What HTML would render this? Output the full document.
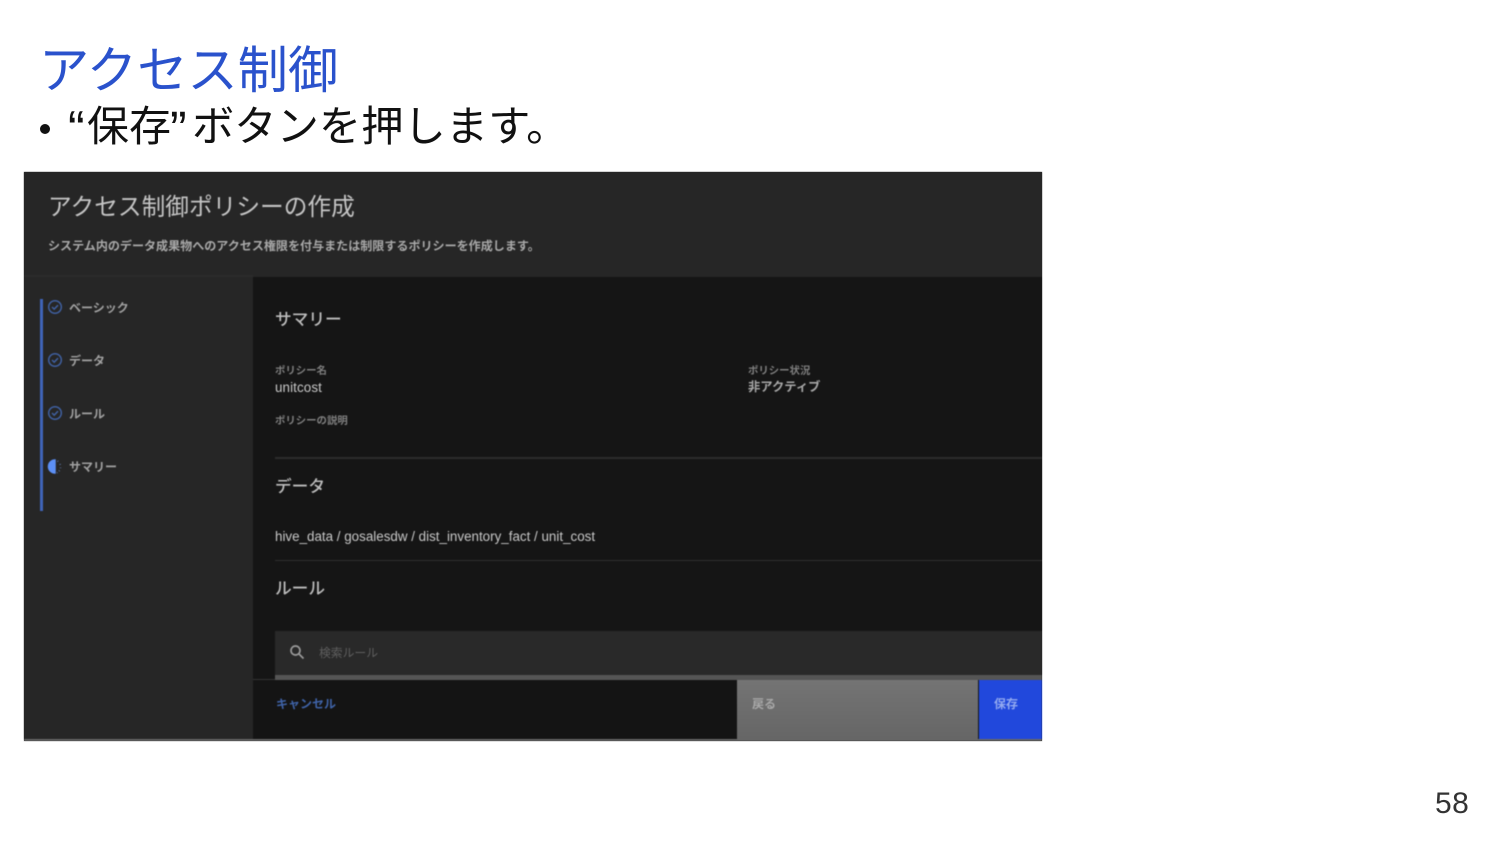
<!DOCTYPE html>
<html lang="ja"><head><meta charset="utf-8"><style>
html,body{margin:0;padding:0;background:#fff;width:1500px;height:844px;overflow:hidden}
body{position:relative;font-family:"Liberation Sans","Noto Sans CJK JP",sans-serif}
.a{position:absolute;white-space:nowrap;line-height:1}
.b{position:absolute}
.t{color:#bdbdbd}
.h{color:#111;filter:blur(.3px);font-weight:400}
</style></head><body>
<div class="a" style="left:39px;top:46px;font-size:50.300px;font-weight:400;color:#2a52cc;filter:blur(.3px)">アクセス制御</div>
<div class="b" style="left:40px;top:124px;width:10px;height:10px;border-radius:50%;background:#111"></div>
<div class="a h" style="left:68px;top:104px;font-size:50px">“</div>
<div class="a h" style="left:87px;top:106px;font-size:42px">保存</div>
<div class="a h" style="left:170px;top:104px;font-size:50px">”</div>
<div class="a h" style="left:192px;top:106px;font-size:42.300px">ボタンを押します。</div>
<div class="a" style="left:1435px;top:789px;font-size:30px;color:#333;letter-spacing:.5px">58</div>

<div class="b" style="left:24px;top:172px;width:1018px;height:569px;background:#262626"></div>
<div class="b" style="left:24px;top:172px;width:1018px;height:569px;background:#262626;overflow:hidden;filter:blur(.55px)">
 <div class="b" style="left:229px;top:105px;width:789px;height:464px;background:#151515"></div>
 <div class="b" style="left:0;top:103px;width:229px;height:2px;background:#2b2b2b"></div>
 <div class="b" style="left:0;top:567px;width:1018px;height:2px;background:#666"></div>
 <div class="a" style="left:24px;top:25px;font-size:23.700px;color:#c4c4c4">アクセス制御ポリシーの作成</div>
 <div class="a t" style="left:24px;top:68px;font-size:12.050px;color:#a8a8a8;font-weight:700">システム内のデータ成果物へのアクセス権限を付与または制限するポリシーを作成します。</div>

 <div class="b" style="left:16px;top:127px;width:3px;height:212px;background:#3f64b8"></div>
 <svg class="b" style="left:23px;top:127px" width="16" height="190" viewBox="0 0 16 190" fill="none" stroke="#3f5f9f" stroke-width="1.500">
  <circle cx="8" cy="8" r="6.300"/><path d="M5 8l2.200 2.200L11 6.200"/>
  <circle cx="8" cy="61" r="6.300"/><path d="M5 61l2.200 2.200L11 59.200"/>
  <circle cx="8" cy="114" r="6.300"/><path d="M5 114l2.200 2.200L11 112.200"/>
  <path d="M8 161a6.500 6.500 0 0 0 0 13z" fill="#5c8ff5" stroke="#5c8ff5"/>
  <path d="M10.500 162l.6.5M13 165l.3 .8M13.500 168.500v.6M12.500 171.500l-.5 .6M10.500 173.500l-.6 .3" stroke="#5c76a8"/>
 </svg>
 <div class="a t" style="left:45px;top:130px;font-size:12px;font-weight:700;color:#a0a0a0">ベーシック</div>
 <div class="a t" style="left:45px;top:183px;font-size:12px;font-weight:700;color:#a0a0a0">データ</div>
 <div class="a t" style="left:45px;top:236px;font-size:12px;font-weight:700;color:#a0a0a0">ルール</div>
 <div class="a t" style="left:45px;top:289px;font-size:12px;font-weight:700;color:#a0a0a0">サマリー</div>

 <div class="a" style="left:251px;top:140px;font-size:16.700px;font-weight:500;color:#bdbdbd">サマリー</div>
 <div class="a" style="left:251px;top:193px;font-size:10.400px;margin-top:2px;color:#7f7f7f;font-weight:700">ポリシー名</div>
 <div class="a" style="left:251px;top:209px;font-size:13.400px;font-weight:400;color:#c8c8c8;letter-spacing:.1px">unitcost</div>
 <div class="a" style="left:251px;top:245px;font-size:10.400px;color:#7f7f7f;font-weight:700">ポリシーの説明</div>
 <div class="a" style="left:724px;top:195px;font-size:10.400px;color:#7f7f7f;font-weight:700">ポリシー状況</div>
 <div class="a" style="left:724px;top:209px;font-size:12.300px;font-weight:700;color:#a8a8a8">非アクティブ</div>
 <div class="b" style="left:251px;top:285px;width:767px;height:2px;background:#2c2c2c"></div>
 <div class="a" style="left:251px;top:307px;font-size:16.700px;font-weight:500;color:#bdbdbd">データ</div>
 <div class="a" style="left:251px;top:358px;font-size:13.400px;font-weight:400;color:#c8c8c8">hive_data / gosalesdw / dist_inventory_fact / unit_cost</div>
 <div class="b" style="left:251px;top:388px;width:767px;height:1px;background:#2e2e2e"></div>
 <div class="a" style="left:251px;top:409px;font-size:16.700px;font-weight:500;color:#bdbdbd">ルール</div>

 <div class="b" style="left:251px;top:459px;width:767px;height:44px;background:#292929"></div>
 <div class="b" style="left:251px;top:503px;width:767px;height:5px;background:#555"></div>
 <svg class="b" style="left:265px;top:472px" width="16" height="16" viewBox="0 0 16 16" fill="none" stroke="#9a9a9a" stroke-width="1.700"><circle cx="6.500" cy="6.500" r="4.500"/><path d="M10 10l4.500 4.500"/></svg>
 <div class="a" style="left:295px;top:476px;font-size:11.800px;color:#5f5f5f">検索ルール</div>

 <div class="b" style="left:229px;top:507px;width:22px;height:1px;background:#333"></div>
 <div class="b" style="left:229px;top:508px;width:484px;height:59px;background:#141414"></div>
 <div class="a" style="left:252px;top:526px;font-size:12px;font-weight:700;color:#3f63a8">キャンセル</div>
 <div class="b" style="left:713px;top:508px;width:241px;height:59px;background:linear-gradient(#747474,#666)"></div>
 <div class="a" style="left:728px;top:526px;font-size:12px;font-weight:700;color:#a8a8a8">戻る</div>
 <div class="b" style="left:955px;top:508px;width:63px;height:59px;background:#2148dc"></div>
 <div class="a" style="left:970px;top:526px;font-size:12px;font-weight:700;color:#93aaf0">保存</div>
</div>
</body></html>
